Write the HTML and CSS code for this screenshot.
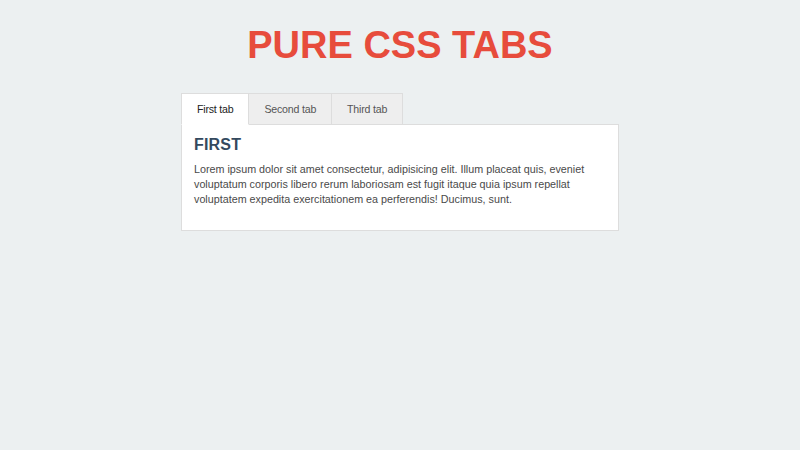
FILE: index.html
```html
<!DOCTYPE html>
<html>
<head>
<meta charset="utf-8">
<link rel="stylesheet" href="styles.css">
</head>
<body>
<h1 class="title">PURE CSS TABS</h1>
<div class="tabs">
  <div class="tab-bar">
    <div class="tab active">First tab</div>
    <div class="tab">Second tab</div>
    <div class="tab">Third tab</div>
  </div>
  <div class="panel">
    <h2 class="panel-title">FIRST</h2>
    <p class="panel-text">Lorem ipsum dolor sit amet consectetur, adipisicing elit. Illum placeat quis, eveniet voluptatum corporis libero rerum laboriosam est fugit itaque quia ipsum repellat voluptatem expedita exercitationem ea perferendis! Ducimus, sunt.</p>
  </div>
</div>
</body>
</html>
```
FILE: styles.css
```css
html, body {
  margin: 0;
  padding: 0;
  background: #ecf0f1;
  font-family: "Liberation Sans", Arial, sans-serif;
}
body {
  padding-top: 24px;
}
.title {
  margin: 0;
  text-align: center;
  font-size: 38px;
  line-height: 43px;
  font-weight: bold;
  color: #e74c3c;
}
.tabs {
  width: 438px;
  margin: 26px auto 0;
}
.tab-bar {
  display: flex;
}
.tab {
  box-sizing: border-box;
  height: 32px;
  padding: 0 15px;
  display: flex;
  align-items: center;
  font-size: 10.6px;
  letter-spacing: -0.2px;
  color: #555;
  background: #eeeeee;
  border: 1px solid #dddddd;
  border-left: none;
  margin-bottom: -1px;
}
.tab:first-child {
  border-left: 1px solid #dddddd;
}
.tab.active {
  background: #fff;
  color: #222;
  border-bottom-color: #fff;
  position: relative;
  z-index: 1;
}
.panel {
  background: #fff;
  border: 1px solid #dddddd;
  padding: 11px 12px 23px;
}
.panel-title {
  margin: 0 0 8px;
  font-size: 16px;
  line-height: 18px;
  letter-spacing: 0.2px;
  color: #34495e;
}
.panel-text {
  margin: 0;
  font-size: 10.75px;
  line-height: 15px;
  color: #4a4a4a;
}
```
